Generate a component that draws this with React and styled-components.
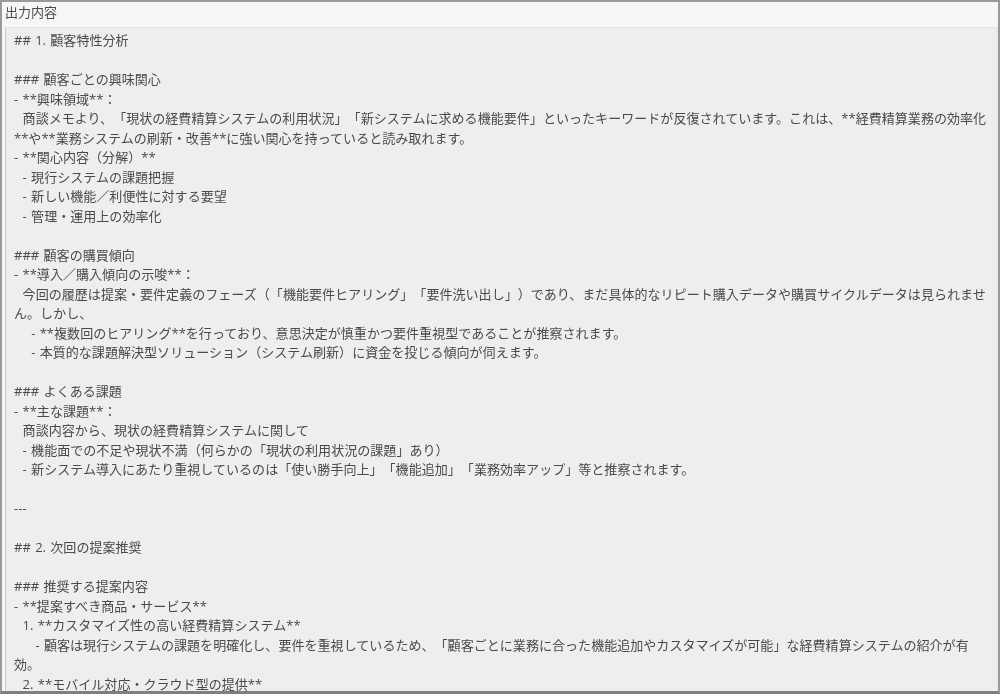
import React from 'react';
import styled, { createGlobalStyle } from 'styled-components';

const GlobalStyle = createGlobalStyle`
  html, body {
    margin: 0;
    padding: 0;
    background: #eeeeee;
  }
`;

const Frame = styled.main`
  width: 1000px;
  height: 694px;
  box-sizing: border-box;
  display: flex;
  flex-direction: column;
  overflow: hidden;
  background: #f6f6f6;
  border: solid #9a9a9a;
  border-width: 2px 2px 3px 2px;
  border-bottom-color: #7f7f7f;
  font-family: 'Open Sans', 'Noto Sans CJK JP', sans-serif;
  text-spacing-trim: space-all;
  word-spacing: 0.9px;
  color: #4a4a4a;
`;

const Title = styled.h1`
  margin: 0;
  flex: 0 0 25px;
  padding-left: 3px;
  font-size: 13px;
  font-weight: 400;
  line-height: 21px;
  filter: blur(0.6px);
`;

const Output = styled.section`
  flex: 1;
  min-height: 0;
  margin-left: 3px;
  padding: 3px 8px 0 8px;
  overflow: hidden;
  background: #eeeeee;
  border-top: 1px solid #e4e4e4;
  border-left: 1px solid #cdcdcd;
  border-right: 1px solid #e6e6e6;
`;

const Content = styled.div`
  font-size: 13.06px;
  line-height: 19.5px;
  white-space: pre-wrap;
  line-break: strict;
  filter: blur(0.6px);
`;

const Line = styled.div`
  min-height: 19.5px;
`;

const LINES = [
  '## 1. 顧客特性分析',
  '',
  '### 顧客ごとの興味関心',
  '- **興味領域**：',
  '  商談メモより、「現状の経費精算システムの利用状況」「新システムに求める機能要件」といったキーワードが反復されています。これは、**経費精算業務の効率化**や**業務システムの刷新・改善**に強い関心を持っていると読み取れます。',
  '- **関心内容（分解）**',
  '  - 現行システムの課題把握',
  '  - 新しい機能／利便性に対する要望',
  '  - 管理・運用上の効率化',
  '',
  '### 顧客の購買傾向',
  '- **導入／購入傾向の示唆**：',
  '  今回の履歴は提案・要件定義のフェーズ（「機能要件ヒアリング」「要件洗い出し」）であり、まだ具体的なリピート購入データや購買サイクルデータは見られません。しかし、',
  '    - **複数回のヒアリング**を行っており、意思決定が慎重かつ要件重視型であることが推察されます。',
  '    - 本質的な課題解決型ソリューション（システム刷新）に資金を投じる傾向が伺えます。',
  '',
  '### よくある課題',
  '- **主な課題**：',
  '  商談内容から、現状の経費精算システムに関して',
  '  - 機能面での不足や現状不満（何らかの「現状の利用状況の課題」あり）',
  '  - 新システム導入にあたり重視しているのは「使い勝手向上」「機能追加」「業務効率アップ」等と推察されます。',
  '',
  '---',
  '',
  '## 2. 次回の提案推奨',
  '',
  '### 推奨する提案内容',
  '- **提案すべき商品・サービス**',
  '  1. **カスタマイズ性の高い経費精算システム**',
  '     - 顧客は現行システムの課題を明確化し、要件を重視しているため、「顧客ごとに業務に合った機能追加やカスタマイズが可能」な経費精算システムの紹介が有効。',
  '  2. **モバイル対応・クラウド型の提供**',
];

const App = () => (
  <>
    <GlobalStyle />
    <Frame>
      <Title>出力内容</Title>
      <Output>
        <Content>
          {LINES.map((line, i) => (
            <Line key={i}>{line}</Line>
          ))}
        </Content>
      </Output>
    </Frame>
  </>
);

export default App;
